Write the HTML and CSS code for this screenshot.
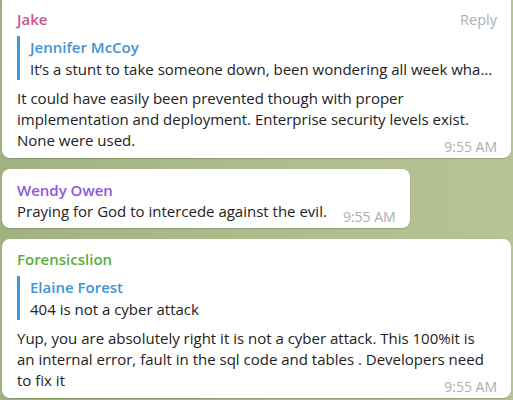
FILE: index.html
```html
<!DOCTYPE html>
<html>
<head>
<meta charset="utf-8">
<link rel="stylesheet" href="styles.css">
</head>
<body>
<div class="chat">
  <div class="bubble wide first">
    <div class="head">
      <span class="name jake">Jake</span>
      <span class="reply">Reply</span>
    </div>
    <div class="quote">
      <div class="qname">Jennifer McCoy</div>
      <div class="qtext">It’s a stunt to take someone down, been wondering all week wha...</div>
    </div>
    <div class="text">It could have easily been prevented though with proper<br>implementation and deployment. Enterprise security levels exist.<br>None were used.<span class="time">9:55 AM</span></div>
  </div>

  <div class="bubble narrow">
    <div class="name wendy">Wendy Owen</div>
    <div class="text">Praying for God to intercede against the evil.<span class="time">9:55 AM</span></div>
  </div>

  <div class="bubble wide">
    <div class="name forensic">Forensicslion</div>
    <div class="quote">
      <div class="qname">Elaine Forest</div>
      <div class="qtext">404 is not a cyber attack</div>
    </div>
    <div class="text">Yup, you are absolutely right it is not a cyber attack. This 100%it is<br>an internal error, fault in the sql code and tables . Developers need<br>to fix it<span class="time">9:55 AM</span></div>
  </div>
</div>
</body>
</html>
```

FILE: styles.css
```css
* { box-sizing: border-box; }
html, body { margin: 0; height: 100%; }
body {
  width: 513px;
  height: 400px;
  overflow: hidden;
  background: linear-gradient(90deg, #a1b282 0%, #adbb8b 45%, #b8c395 100%);
  font-family: "Open Sans", "Noto Sans", sans-serif;
  font-size: 15px;
  color: #222;
}
.chat {
  display: flex;
  flex-direction: column;
  gap: 11px;
  padding: 0 2px;
  margin-top: -6px;
}
.bubble {
  background: #fff;
  border-radius: 8px;
  box-shadow: 0 1px 1px rgba(60, 70, 40, 0.25);
  padding: 9px 14px 2px 15px;
  display: flow-root;
}
.bubble.first { padding-top: 14px; }
.bubble.narrow {
  align-self: flex-start;
  padding-top: 10px;
  padding-right: 14px;
}
.head {
  display: flex;
  justify-content: space-between;
  align-items: baseline;
}
.name {
  font-weight: 600;
  line-height: 22px;
}
.jake { color: #d0528a; }
.wendy { color: #8c58d8; }
.forensic { color: #5aae3e; }
.reply {
  color: #a9b1b8;
  font-size: 14.5px;
}
.quote {
  border-left: 3px solid #3d98dc;
  padding-left: 10px;
  margin: 6px 0 8px 0;
  line-height: 22px;
}
.qname {
  color: #3d95d6;
  font-weight: 600;
}
.qtext {
  white-space: nowrap;
}
.text {
  line-height: 21px;
}
.time {
  float: right;
  margin: 7.5px 0 0 16px;
  color: #a7afb6;
  font-size: 14px;
  line-height: 18px;
}
```
